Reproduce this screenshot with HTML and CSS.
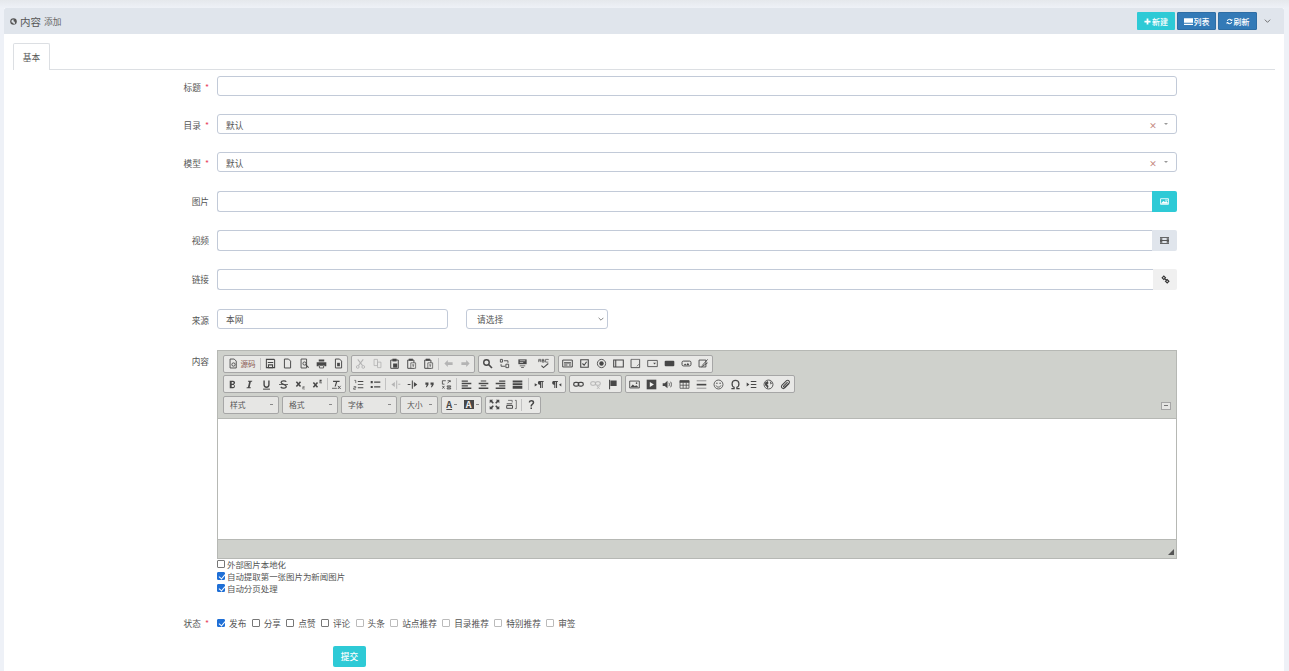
FILE: index.html
```html
<!DOCTYPE html>
<html lang="zh">
<head>
  <meta charset="UTF-8" />
  <meta name="viewport" content="width=device-width, initial-scale=1" />
  <title>内容 添加</title>
  <link rel="stylesheet" href="styles.css">
</head>
<body>
  <svg class="sprite" xmlns="http://www.w3.org/2000/svg">
    <symbol id="i-doc" viewBox="0 0 16 16"><path d="M3.5 1.500h6l3 3v10h-9z" fill="none" stroke="currentColor" stroke-width="1.400"/></symbol>
    <symbol id="i-source" viewBox="0 0 16 16"><path d="M3 1.500h6l3 3v10H3z" fill="none" stroke="currentColor" stroke-width="1.300"/><circle cx="8" cy="9.500" r="2.400" fill="none" stroke="currentColor" stroke-width="1.300"/></symbol>
    <symbol id="i-save" viewBox="0 0 16 16"><path d="M2 2h11l1 1v11H2z" fill="none" stroke="currentColor" stroke-width="1.500"/><path d="M4 6.500h8M5 10h6v4H5z" fill="none" stroke="currentColor" stroke-width="1.500"/></symbol>
    <symbol id="i-preview" viewBox="0 0 16 16"><path d="M3 1.500h8v13H3z" fill="none" stroke="currentColor" stroke-width="1.300"/><circle cx="8" cy="8" r="2.300" fill="none" stroke="currentColor" stroke-width="1.300"/><path d="M10 10l4 4" stroke="currentColor" stroke-width="1.600"/></symbol>
    <symbol id="i-print" viewBox="0 0 16 16"><path d="M4 2h8v3H4zM1 6h14v6h-3v-2H4v2H1z" fill="currentColor"/><path d="M5 11h6v3.500H5z" fill="none" stroke="currentColor" stroke-width="1.200"/></symbol>
    <symbol id="i-page" viewBox="0 0 16 16"><path d="M3.500 1.500h6l3 3v10h-9z" fill="none" stroke="currentColor" stroke-width="1.400"/><path d="M6 7h4v5H6z" fill="currentColor"/></symbol>
    <symbol id="i-cut" viewBox="0 0 16 16"><path d="M4 2l7 9M12 2l-7 9" stroke="currentColor" stroke-width="1.500" fill="none"/><circle cx="4" cy="13" r="2" fill="none" stroke="currentColor" stroke-width="1.300"/><circle cx="12" cy="13" r="2" fill="none" stroke="currentColor" stroke-width="1.300"/></symbol>
    <symbol id="i-copy" viewBox="0 0 16 16"><path d="M3 2h5v9H3zM8 6h5v8H8z" fill="none" stroke="currentColor" stroke-width="1.200"/></symbol>
    <symbol id="i-paste" viewBox="0 0 16 16"><path d="M2.500 3h11v12h-11z" fill="none" stroke="currentColor" stroke-width="1.400"/><path d="M5 1h6v4H5z" fill="currentColor"/><path d="M6 8h6v6H6z" fill="currentColor"/></symbol>
    <symbol id="i-pastet" viewBox="0 0 16 16"><path d="M2.500 3h9v12h-9z" fill="none" stroke="currentColor" stroke-width="1.400"/><path d="M4 1h6v3H4z" fill="currentColor"/><path d="M7 7h7v8H7z" fill="#e8e8e6" stroke="currentColor"/><path d="M9 10h3M10.500 10v3" stroke="currentColor"/></symbol>
    <symbol id="i-undo" viewBox="0 0 16 16"><path d="M7 3L2 8l5 5v-3h7V6H7z" fill="currentColor"/></symbol>
    <symbol id="i-redo" viewBox="0 0 16 16"><path d="M9 3l5 5-5 5v-3H2V6h7z" fill="currentColor"/></symbol>
    <symbol id="i-find" viewBox="0 0 16 16"><circle cx="6.500" cy="6.500" r="4" fill="none" stroke="currentColor" stroke-width="2"/><path d="M9.500 9.500l5 5" stroke="currentColor" stroke-width="2.400"/></symbol>
    <symbol id="i-replace" viewBox="0 0 16 16"><path d="M2 2h3v4H2zM10 9h4v5h-4z" fill="none" stroke="currentColor" stroke-width="1.300"/><path d="M7 4h6v3M9 12H3V9" fill="none" stroke="currentColor" stroke-width="1.300"/></symbol>
    <symbol id="i-selectall" viewBox="0 0 16 16"><path d="M2 2h12v7H2z" fill="currentColor"/><path d="M4 11h8v1H4zM6 13.500h4v1H6z" fill="currentColor"/><path d="M4 4h8M4 6.500h5" stroke="#e8e8e6"/></symbol>
    <symbol id="i-spell" viewBox="0 0 16 16"><path d="M1 6V2h3v4M1 4h3M6 2h2.500v2H6zm0 2h3v2H6zM11 2h4v1M11 2v4h4" fill="none" stroke="currentColor"/><path d="M5 11l3 3 7-6" fill="none" stroke="currentColor" stroke-width="1.500"/></symbol>
    <symbol id="i-form" viewBox="0 0 16 16"><path d="M1 3h14v10H1z" fill="none" stroke="currentColor" stroke-width="1.400"/><path d="M3 6h10v2H3zM3 9.500h5v1.500H3zM10 9.500h3v1.500h-3z" fill="currentColor"/></symbol>
    <symbol id="i-check" viewBox="0 0 16 16"><path d="M2.500 2.500h11v11h-11z" fill="none" stroke="currentColor" stroke-width="1.600"/><path d="M5 8l2.500 2.500L11 5.500" fill="none" stroke="currentColor" stroke-width="1.600"/></symbol>
    <symbol id="i-radio" viewBox="0 0 16 16"><circle cx="8" cy="8" r="6" fill="none" stroke="currentColor" stroke-width="1.300"/><circle cx="8" cy="8" r="3.200" fill="currentColor"/></symbol>
    <symbol id="i-text" viewBox="0 0 16 16"><path d="M1 3h14v10H1z" fill="none" stroke="currentColor" stroke-width="1.500"/><path d="M4 3v10" stroke="currentColor" stroke-width="1.500"/></symbol>
    <symbol id="i-area" viewBox="0 0 16 16"><path d="M1.500 2v12H14l0-12" fill="none" stroke="currentColor" stroke-width="1.300"/><path d="M1.500 2h12.500M10 12l3-3" stroke="currentColor"/></symbol>
    <symbol id="i-select" viewBox="0 0 16 16"><path d="M1 3.500h14v9H1z" fill="none" stroke="currentColor" stroke-width="1.200"/><path d="M9 7h4l-2 2.500z" fill="currentColor"/></symbol>
    <symbol id="i-btn" viewBox="0 0 16 16"><rect x="1" y="4" width="14" height="8" rx="1.500" fill="currentColor"/></symbol>
    <symbol id="i-imgbtn" viewBox="0 0 16 16"><rect x="1.500" y="4.500" width="13" height="7" rx="2" fill="none" stroke="currentColor" stroke-width="1.400"/><path d="M4 10l2-2 2 2 2-3 2 3z" fill="currentColor"/></symbol>
    <symbol id="i-hidden" viewBox="0 0 16 16"><path d="M1.500 3h10v10h-10z" fill="none" stroke="currentColor" stroke-width="1.300"/><path d="M6 11l8-9M5 13l9-6" stroke="currentColor" stroke-width="1.300"/></symbol>
    <symbol id="i-bold" viewBox="0 0 16 16"><path d="M4 2.500h5a2.800 2.800 0 0 1 1 5.400 3 3 0 0 1-1 5.600H4zM6.800 4.500v2.400H8.500a1.200 1.200 0 0 0 0-2.400zM6.800 8.900v2.600H9a1.300 1.300 0 0 0 0-2.600z" fill="currentColor" fill-rule="evenodd"/></symbol>
    <symbol id="i-italic" viewBox="0 0 16 16"><path d="M6 2.500h6l-.3 1.500H10L8.200 12H10l-.3 1.500h-6l.3-1.500h1.700L7.500 4H5.700z" fill="currentColor"/></symbol>
    <symbol id="i-under" viewBox="0 0 16 16"><path d="M4.500 2v6.500a3.500 3.500 0 0 0 7 0V2" fill="none" stroke="currentColor" stroke-width="2"/><path d="M3 14h10v1.500H3z" fill="currentColor"/></symbol>
    <symbol id="i-strike" viewBox="0 0 16 16"><path d="M12 4c-1-1.500-7-2-7.500 1 0 3 7.500 2.500 7.500 6 0 3-6.500 3-8 .5" fill="none" stroke="currentColor" stroke-width="1.800"/><path d="M1.500 7.500h13v1.200h-13z" fill="currentColor"/></symbol>
    <symbol id="i-sub" viewBox="0 0 16 16"><path d="M2 4l6 7M8 4l-6 7" stroke="currentColor" stroke-width="2.200"/><path d="M11 11h3v1.500h-2V14h2.500v1H11z" fill="currentColor"/></symbol>
    <symbol id="i-sup" viewBox="0 0 16 16"><path d="M2 5l6 7M8 5l-6 7" stroke="currentColor" stroke-width="2.200"/><path d="M11 1h3v2.500h-2V5h2.500v1H11z" fill="currentColor"/></symbol>
    <symbol id="i-clear" viewBox="0 0 16 16"><path d="M3 2.500h9.500V4.300H9L7 11H5.200L7.200 4.300H3z" fill="currentColor"/><path d="M1.500 13.500h7" stroke="currentColor" stroke-width="1.200"/><path d="M10 10l4 4.500M14 10l-4 4.500" stroke="currentColor" stroke-width="1.300"/></symbol>
    <symbol id="i-ol" viewBox="0 0 16 16"><path d="M7 3h8v1.300H7zM7 7.500h8v1.300H7zM7 12h8v1.300H7z" fill="currentColor"/><path d="M2 2h2v4M1 11h3v2H1v2h3" fill="none" stroke="currentColor"/></symbol>
    <symbol id="i-ul" viewBox="0 0 16 16"><path d="M1 3h3v3H1zM1 10h3v3H1zM6 3.500h9v2H6zM6 10.500h9v2H6z" fill="currentColor"/></symbol>
    <symbol id="i-outdent" viewBox="0 0 16 16"><path d="M9 2h1.500v12H9zM12 7h3v1.500h-3zM7 4.500v7L2 8z" fill="currentColor"/></symbol>
    <symbol id="i-indent" viewBox="0 0 16 16"><path d="M7 2h1.500v12H7zM1 7.200h4V8.800H1zM10 4.500v7l5-3.500z" fill="currentColor"/></symbol>
    <symbol id="i-quote" viewBox="0 0 16 16"><path d="M2 5h4.500v3.500L4 12H2.500l1.500-3.500H2zM9.500 5H14v3.500L11.500 12H10l1.500-3.500h-2z" fill="currentColor"/></symbol>
    <symbol id="i-div" viewBox="0 0 16 16"><path d="M2 2.500h5M2 2.500v5h3M9.500 2.500h4v2M9.500 6l4-3.500M2 10l3 4M5 10l-3 4M9 10h5v1.500H9zM9 13h5v1.500H9z" fill="none" stroke="currentColor" stroke-width="1.200"/></symbol>
    <symbol id="i-left" viewBox="0 0 16 16"><path d="M1 2h9v2H1zM1 5.500h14v2H1zM1 9h9v2H1zM1 12.500h14v2H1z" fill="currentColor"/></symbol>
    <symbol id="i-center" viewBox="0 0 16 16"><path d="M4 2h8v1.600H4zM1 5.500h14v2H1zM4 9h8v1.600H4zM1 12.500h14v2H1z" fill="currentColor"/></symbol>
    <symbol id="i-right" viewBox="0 0 16 16"><path d="M6 2h9v2H6zM1 5.500h14v2H1zM6 9h9v2H6zM1 12.500h14v2H1z" fill="currentColor"/></symbol>
    <symbol id="i-justify" viewBox="0 0 16 16"><path d="M1 2h14v3H1zM1 6h14v3H1zM1 10h14v4H1z" fill="currentColor"/></symbol>
    <symbol id="i-ltr" viewBox="0 0 16 16"><path d="M7 3h7v1.500h-1.200V13h-1.500V4.500h-1V13H8.800V8.500A3 3 0 0 1 7 3zM1 6l4 2.500L1 11z" fill="currentColor"/></symbol>
    <symbol id="i-rtl" viewBox="0 0 16 16"><path d="M3 3h7v1.500H8.800V13H7.300V4.500h-1V13H4.800V8.500A3 3 0 0 1 3 3zM15 6l-3.500 2.500L15 11z" fill="currentColor"/></symbol>
    <symbol id="i-link" viewBox="0 0 16 16"><rect x="1" y="5" width="7.500" height="5.500" rx="2.700" fill="none" stroke="currentColor" stroke-width="1.800"/><rect x="7.500" y="5" width="7.500" height="5.500" rx="2.700" fill="none" stroke="currentColor" stroke-width="1.800"/></symbol>
    <symbol id="i-unlink" viewBox="0 0 16 16"><rect x="1" y="4" width="7" height="5" rx="2.500" fill="none" stroke="currentColor" stroke-width="1.500"/><rect x="8" y="4" width="7" height="5" rx="2.500" fill="none" stroke="currentColor" stroke-width="1.500"/><path d="M10 10l4 4.500M14 10l-4 4.500" stroke="currentColor" stroke-width="1.200"/></symbol>
    <symbol id="i-flag" viewBox="0 0 16 16"><path d="M3 1h1.500v14H3zM5 2h9v8H5z" fill="currentColor"/></symbol>
    <symbol id="i-image" viewBox="0 0 16 16"><path d="M1 3h14v10H1z" fill="none" stroke="currentColor" stroke-width="1.300"/><path d="M2 12l3.500-4 3 2.500 2-1.500 3.500 3z" fill="currentColor"/><circle cx="11" cy="6" r="1.200" fill="currentColor"/></symbol>
    <symbol id="i-flash" viewBox="0 0 16 16"><path d="M1 1h14v14H1z" fill="currentColor"/><path d="M5.500 4.500v7l6-3.500z" fill="#f2f2f0"/></symbol>
    <symbol id="i-audio" viewBox="0 0 16 16"><path d="M1 6h3l4-3.500v11L4 10H1z" fill="currentColor"/><path d="M10 5.500c1 1.500 1 3.500 0 5M12.500 4c1.600 2.500 1.600 5.500 0 8" fill="none" stroke="currentColor" stroke-width="1.200"/></symbol>
    <symbol id="i-table" viewBox="0 0 16 16"><path d="M1 2h14v3.500H1z" fill="currentColor"/><path d="M1.500 2.500h13v11h-13zM1.500 9h13M6 5v8.500M10.500 5v8.500" fill="none" stroke="currentColor" stroke-width="1.100"/></symbol>
    <symbol id="i-hr" viewBox="0 0 16 16"><path d="M1 1.500h14v2H1z" fill="#aaa"/><path d="M1 7h14v2.400H1z" fill="currentColor"/><path d="M1 12.500h14v2H1z" fill="#aaa"/></symbol>
    <symbol id="i-smiley" viewBox="0 0 16 16"><circle cx="8" cy="8" r="6.500" fill="none" stroke="currentColor" stroke-width="1.200"/><circle cx="5.700" cy="6.200" r="1" fill="currentColor"/><circle cx="10.300" cy="6.200" r="1" fill="currentColor"/><path d="M4.500 9.500c1 3 6 3 7 0" fill="none" stroke="currentColor" stroke-width="1.200"/></symbol>
    <symbol id="i-omega" viewBox="0 0 16 16"><path d="M2 14h4v-2C2 10.500 1.500 2 8 2s6 8.500 2 10v2h4" fill="none" stroke="currentColor" stroke-width="1.800"/></symbol>
    <symbol id="i-break" viewBox="0 0 16 16"><path d="M1 5l4 3-4 3z" fill="currentColor"/><path d="M7 3h8v1.500H7zM7 7.300h8v1.500H7zM7 11.600h8v1.500H7z" fill="currentColor"/></symbol>
    <symbol id="i-iframe" viewBox="0 0 16 16"><circle cx="8" cy="8" r="6.500" fill="none" stroke="currentColor" stroke-width="1.300"/><path d="M3 5l4-2 1 3-2 2 2 2-1 4-2-3-2-2zM10 3l3 3-2 2z" fill="currentColor"/></symbol>
    <symbol id="i-attach" viewBox="0 0 16 16"><path d="M13.500 6.500l-6.500 6.500c-3 2.500-6.500-1-4-4l6.500-6.500c2.500-2 5.500 1 3.500 3.500L7 11.500c-1.500 1-2.500-.5-1.500-1.500L11 4.500" fill="none" stroke="currentColor" stroke-width="1.500"/></symbol>
    <symbol id="i-max" viewBox="0 0 16 16"><path d="M1 1h5L4.500 2.700 7 5.500 5.500 7 2.700 4.500 1 6zM15 1v5l-1.700-1.500L10.500 7 9 5.500l2.500-2.800L10 1zM1 15v-5l1.700 1.500L5.500 9 7 10.500l-2.500 2.800L6 15zM15 15h-5l1.500-1.700L9 10.500 10.500 9l2.800 2.500L15 10z" fill="currentColor"/></symbol>
    <symbol id="i-blocks" viewBox="0 0 16 16"><path d="M1 7h8M1 13.500h8.500v-4H1z" fill="none" stroke="currentColor" stroke-width="1.400"/><path d="M13 2h2v12h-2" fill="none" stroke="currentColor"/><path d="M3 2h6v3" fill="none" stroke="currentColor"/></symbol>
    <symbol id="i-help" viewBox="0 0 16 16"><path d="M4 5c0-4.500 8-4.500 8 0 0 3-3.500 3-3.500 6h-2c0-4 3.200-4 3.200-6 0-2-3.700-2-3.700 0z" fill="currentColor"/><path d="M6.500 12.300h2.200v2.200H6.500z" fill="currentColor"/></symbol>
  </svg>

  <div class="card">
    <header class="card-head">
      <h1 class="card-title">
        <svg class="title-icon" viewBox="0 0 16 16"><circle cx="8" cy="8" r="7.500" fill="#555"/><path d="M3 6l4-3 2 2-2 2 3 1 2 4-3 2-2-3-3-1z" fill="#dfe4ea"/></svg>
        内容 <small>添加</small>
      </h1>
      <div class="head-tools">
        <a class="btn btn-teal"><svg viewBox="0 0 16 16"><path d="M6 1h4v5h5v4h-5v5H6v-5H1V6h5z" fill="currentColor"/></svg>新建</a>
        <a class="btn btn-blue"><svg class="wide" viewBox="0 0 16 12"><path d="M0 0h16v8H0zM0 10h16v2H0z" fill="currentColor"/></svg>列表</a>
        <a class="btn btn-blue"><svg viewBox="0 0 16 16"><path d="M2 7a6 6 0 0 1 10.500-3L14.500 2v5h-5l1.500-1.500A4 4 0 0 0 4.200 7zM14 9a6 6 0 0 1-10.500 3l-2 2V9h5L5 10.500A4 4 0 0 0 11.800 9z" fill="currentColor"/></svg>刷新</a>
        <svg class="collapse" viewBox="0 0 10 6"><path d="M1 1l4 4 4-4" fill="none" stroke="#555" stroke-width="1.200"/></svg>
      </div>
    </header>

    <div class="card-body">
      <ul class="tabs">
        <li class="tab">基本</li>
      </ul>

      <form class="form">
        <div class="row">
          <label class="row-label">标题 <i>*</i></label>
          <div class="row-field"><input class="input" type="text"></div>
        </div>
        <div class="row">
          <label class="row-label">目录 <i>*</i></label>
          <div class="row-field">
            <div class="input combo">默认<span class="combo-x">×</span><span class="combo-caret"></span></div>
          </div>
        </div>
        <div class="row row-b1">
          <label class="row-label">模型 <i>*</i></label>
          <div class="row-field">
            <div class="input combo">默认<span class="combo-x">×</span><span class="combo-caret"></span></div>
          </div>
        </div>
        <div class="row row-tall">
          <label class="row-label">图片</label>
          <div class="row-field group">
            <input class="input" type="text">
            <span class="addon addon-teal"><svg viewBox="0 0 16 16"><path d="M1 3h14v10H1z" fill="none" stroke="currentColor" stroke-width="1.500"/><path d="M2 11l4-4 3 2 2-2 3 3v2H2zM9 5h5v1H9z" fill="currentColor"/></svg></span>
          </div>
        </div>
        <div class="row row-tall">
          <label class="row-label">视频</label>
          <div class="row-field group">
            <input class="input" type="text">
            <span class="addon addon-gray"><svg viewBox="0 0 16 16"><path d="M0 2h16v12H0z" fill="#555"/><path d="M4 3.500h8v3.500H4zM4 9h8v3.500H4z" fill="#dfe4ea"/><path d="M1 4h1.500v2H1zM1 10h1.500v2H1zM13.500 4H15v2h-1.500zM13.500 10H15v2h-1.500z" fill="#dfe4ea"/></svg></span>
          </div>
        </div>
        <div class="row row-tall row-b1">
          <label class="row-label">链接</label>
          <div class="row-field group">
            <input class="input" type="text">
            <span class="addon addon-light"><svg viewBox="0 0 16 16"><path d="M2 5l3-3 3 3-3 3zM8 11l3-3 3 3-3 3zM6 6l4 4" fill="none" stroke="#333" stroke-width="2"/></svg></span>
          </div>
        </div>
        <div class="row row-b2">
          <label class="row-label">来源</label>
          <div class="row-field source">
            <input class="input input-source" type="text" value="本网">
            <div class="input fake-select">请选择<svg viewBox="0 0 10 6"><path d="M1 1l4 4 4-4" fill="none" stroke="#555" stroke-width="1.200"/></svg></div>
          </div>
        </div>

        <div class="row row-editor">
          <label class="row-label row-label-top">内容</label>
          <div class="row-field">
            <div class="editor">
              <div class="ed-top">
                <div class="ed-line">
                  <div class="ed-group">
                    <span class="ed-btn ed-source"><svg><use href="#i-source"/></svg><em>源码</em></span><span class="ed-sep"></span>
                    <span class="ed-btn"><svg><use href="#i-save"/></svg></span>
                    <span class="ed-btn"><svg><use href="#i-doc"/></svg></span>
                    <span class="ed-btn"><svg><use href="#i-preview"/></svg></span>
                    <span class="ed-btn"><svg><use href="#i-print"/></svg></span>
                    <span class="ed-btn"><svg><use href="#i-page"/></svg></span>
                  </div>
                  <div class="ed-group">
                    <span class="ed-btn off"><svg><use href="#i-cut"/></svg></span>
                    <span class="ed-btn off"><svg><use href="#i-copy"/></svg></span>
                    <span class="ed-btn"><svg><use href="#i-paste"/></svg></span>
                    <span class="ed-btn"><svg><use href="#i-pastet"/></svg></span>
                    <span class="ed-btn"><svg><use href="#i-pastet"/></svg></span><span class="ed-sep"></span>
                    <span class="ed-btn off"><svg><use href="#i-undo"/></svg></span>
                    <span class="ed-btn off"><svg><use href="#i-redo"/></svg></span>
                  </div>
                  <div class="ed-group">
                    <span class="ed-btn"><svg><use href="#i-find"/></svg></span>
                    <span class="ed-btn"><svg><use href="#i-replace"/></svg></span>
                    <span class="ed-btn ed-wide"><svg><use href="#i-selectall"/></svg></span>
                    <span class="ed-btn ed-wider"><svg><use href="#i-spell"/></svg></span>
                  </div>
                  <div class="ed-group">
                    <span class="ed-btn"><svg><use href="#i-form"/></svg></span>
                    <span class="ed-btn"><svg><use href="#i-check"/></svg></span>
                    <span class="ed-btn"><svg><use href="#i-radio"/></svg></span>
                    <span class="ed-btn"><svg><use href="#i-text"/></svg></span>
                    <span class="ed-btn"><svg><use href="#i-area"/></svg></span>
                    <span class="ed-btn"><svg><use href="#i-select"/></svg></span>
                    <span class="ed-btn"><svg><use href="#i-btn"/></svg></span>
                    <span class="ed-btn"><svg><use href="#i-imgbtn"/></svg></span>
                    <span class="ed-btn"><svg><use href="#i-hidden"/></svg></span>
                  </div>
                </div>
                <div class="ed-line">
                  <div class="ed-group">
                    <span class="ed-btn"><svg><use href="#i-bold"/></svg></span>
                    <span class="ed-btn"><svg><use href="#i-italic"/></svg></span>
                    <span class="ed-btn"><svg><use href="#i-under"/></svg></span>
                    <span class="ed-btn"><svg><use href="#i-strike"/></svg></span>
                    <span class="ed-btn"><svg><use href="#i-sub"/></svg></span>
                    <span class="ed-btn"><svg><use href="#i-sup"/></svg></span><span class="ed-sep ed-sep-thin"></span>
                    <span class="ed-btn"><svg><use href="#i-clear"/></svg></span>
                  </div>
                  <div class="ed-group">
                    <span class="ed-btn"><svg><use href="#i-ol"/></svg></span>
                    <span class="ed-btn"><svg><use href="#i-ul"/></svg></span><span class="ed-sep"></span>
                    <span class="ed-btn off"><svg><use href="#i-outdent"/></svg></span>
                    <span class="ed-btn"><svg><use href="#i-indent"/></svg></span>
                    <span class="ed-btn"><svg><use href="#i-quote"/></svg></span>
                    <span class="ed-btn"><svg><use href="#i-div"/></svg></span><span class="ed-sep"></span>
                    <span class="ed-btn"><svg><use href="#i-left"/></svg></span>
                    <span class="ed-btn"><svg><use href="#i-center"/></svg></span>
                    <span class="ed-btn"><svg><use href="#i-right"/></svg></span>
                    <span class="ed-btn"><svg><use href="#i-justify"/></svg></span><span class="ed-sep ed-sep-wide"></span>
                    <span class="ed-btn"><svg><use href="#i-ltr"/></svg></span>
                    <span class="ed-btn"><svg><use href="#i-rtl"/></svg></span>
                  </div>
                  <div class="ed-group">
                    <span class="ed-btn"><svg><use href="#i-link"/></svg></span>
                    <span class="ed-btn off"><svg><use href="#i-unlink"/></svg></span>
                    <span class="ed-btn"><svg><use href="#i-flag"/></svg></span>
                  </div>
                  <div class="ed-group ed-group-tight">
                    <span class="ed-btn"><svg><use href="#i-image"/></svg></span>
                    <span class="ed-btn"><svg><use href="#i-flash"/></svg></span>
                    <span class="ed-btn"><svg><use href="#i-audio"/></svg></span>
                    <span class="ed-btn"><svg><use href="#i-table"/></svg></span>
                    <span class="ed-btn"><svg><use href="#i-hr"/></svg></span>
                    <span class="ed-btn"><svg><use href="#i-smiley"/></svg></span>
                    <span class="ed-btn"><svg><use href="#i-omega"/></svg></span>
                    <span class="ed-btn"><svg><use href="#i-break"/></svg></span>
                    <span class="ed-btn"><svg><use href="#i-iframe"/></svg></span>
                    <span class="ed-btn"><svg><use href="#i-attach"/></svg></span>
                  </div>
                </div>
                <div class="ed-line">
                  <span class="ed-combo">样式<b></b></span>
                  <span class="ed-combo">格式<b></b></span>
                  <span class="ed-combo">字体<b></b></span>
                  <span class="ed-combo ed-combo-s">大小<b></b></span>
                  <div class="ed-group">
                    <span class="ed-btn ed-color"><u>A</u><b></b></span>
                    <span class="ed-btn ed-color"><u class="solid">A</u><b></b></span>
                  </div>
                  <div class="ed-group">
                    <span class="ed-btn"><svg><use href="#i-max"/></svg></span>
                    <span class="ed-btn"><svg><use href="#i-blocks"/></svg></span><span class="ed-sep"></span>
                    <span class="ed-btn"><svg><use href="#i-help"/></svg></span>
                  </div>
                  <span class="ed-collapser"></span>
                </div>
              </div>
              <div class="ed-content"></div>
              <div class="ed-bottom"><span class="ed-resize"></span></div>
            </div>

            <div class="opts">
              <label class="opt"><input type="checkbox">外部图片本地化</label>
              <label class="opt"><input type="checkbox" checked>自动提取第一张图片为新闻图片</label>
              <label class="opt"><input type="checkbox" checked>自动分页处理</label>
            </div>
          </div>
        </div>

        <div class="row row-state">
          <label class="row-label row-label-flat">状态 <i>*</i></label>
          <div class="row-field states">
            <label class="state"><input type="checkbox" checked>发布</label>
            <label class="state"><input type="checkbox">分享</label>
            <label class="state"><input type="checkbox">点赞</label>
            <label class="state"><input type="checkbox">评论</label>
            <label class="state pale"><input type="checkbox">头条</label>
            <label class="state pale"><input type="checkbox">站点推荐</label>
            <label class="state pale"><input type="checkbox">目录推荐</label>
            <label class="state pale"><input type="checkbox">特别推荐</label>
            <label class="state pale"><input type="checkbox">审签</label>
          </div>
        </div>

        <div class="form-foot">
          <button class="btn btn-teal btn-submit" type="button">提交</button>
        </div>
      </form>
    </div>
  </div>
</body>
</html>
```

FILE: styles.css
```css
* {
  box-sizing: border-box;
}

html, body {
  height: 100%;
}

body {
  margin: 0;
  padding: 8px 5px 0 4px;
  overflow: hidden;
  background: linear-gradient(#e5e8ec, #eef1f7 8px);
  font-family: "Noto Sans CJK SC", "Liberation Sans", sans-serif;
  font-size: 8.7px;
  color: #555;
}

.sprite {
  display: none;
}

.card {
  background: #fff;
  min-height: 100%;
}

.card-head {
  height: 26px;
  background: #e0e5ec;
  display: flex;
  align-items: center;
  justify-content: space-between;
  padding: 0 13px 0 6px;
  border-radius: 2px 2px 0 0;
}

.card-title {
  margin: 0;
  font-size: 10.5px;
  font-weight: 400;
  color: #555;
  display: flex;
  align-items: center;
  gap: 3px;
}

.card-title small {
  font-size: 8.7px;
  color: #666;
}

.title-icon {
  width: 7px;
  height: 7px;
}

.head-tools {
  display: flex;
  align-items: center;
  gap: 2px;
}

.btn {
  display: flex;
  align-items: center;
  justify-content: center;
  gap: 1px;
  height: 18px;
  border: 0;
  border-radius: 1px;
  color: #fff;
  font-family: inherit;
  font-size: 8px;
  font-weight: 500;
}

.btn svg {
  width: 7px;
  height: 7px;
}

.btn svg.wide {
  width: 9px;
}

.btn-teal {
  width: 38px;
  background: #2ecad6;
}

.btn-blue {
  width: 39px;
  background: #337ab7;
  border: 1px solid #2e6da4;
}

.collapse {
  width: 7px;
  height: 4px;
  margin-left: 5px;
}

.card-body {
  padding: 9px 9px 0;
}

.tabs {
  list-style: none;
  margin: 0 0 6px;
  padding: 0;
  height: 27px;
  border-bottom: 1px solid #dcdfe3;
  display: flex;
}

.tab {
  width: 37px;
  height: 27px;
  background: #fff;
  border: 1px solid #dcdfe3;
  border-bottom: 0;
  border-radius: 2px 2px 0 0;
  display: flex;
  align-items: center;
  justify-content: center;
}

.row {
  display: flex;
  margin-bottom: 18px;
}

.row-b1 {
  margin-bottom: 19px;
}

.row-b2 {
  margin-bottom: 21px;
}

.row-editor {
  margin-bottom: 23px;
}

.row-state {
  margin-bottom: 16px;
}

.row-label {
  width: 204px;
  padding: 2px 8px 0 0;
  flex: none;
  display: flex;
  align-items: center;
  justify-content: flex-end;
  gap: 4px;
}

.row-tall .row-label, .row-label-flat {
  padding-top: 0;
}

.row-label i {
  color: #e9435f;
  font-style: normal;
}

.row-label-top {
  align-items: flex-start;
  padding-top: 5px;
  height: 20px;
}

.row-field {
  width: 960px;
  flex: none;
}

.input {
  display: block;
  width: 100%;
  height: 20px;
  padding: 0 8px;
  background: #fff;
  border: 1px solid #c2cad8;
  border-radius: 3px;
  font-family: inherit;
  font-size: 8.7px;
  color: #555;
  outline: 0;
}

.row-tall .input {
  height: 21px;
  border-radius: 3px 0 0 3px;
  border-right: 0;
}

.combo {
  display: flex;
  align-items: center;
  padding-top: 2px;
}

.combo-x {
  margin-left: auto;
  color: #c4857c;
  font-size: 8px;
  font-weight: 700;
}

.combo-caret {
  width: 0;
  height: 0;
  margin: -2px 0 0 7px;
  border: 2.5px solid transparent;
  border-top-color: #999;
  border-bottom: 0;
}

.group {
  display: flex;
}

.addon {
  width: 25px;
  height: 21px;
  flex: none;
  display: flex;
  align-items: center;
  justify-content: center;
  border-radius: 0 2px 2px 0;
}

.addon svg {
  width: 9px;
  height: 9px;
}

.addon-teal {
  background: #2ecad6;
  color: #fff;
}

.addon-gray {
  background: #e0e5ec;
}

.addon-light {
  background: #f0f0f0;
  width: 24px;
}

.source {
  display: flex;
  gap: 18px;
}

.input-source {
  width: 231px;
}

.fake-select {
  width: 142px;
  padding: 0 3px 0 10px;
  display: flex;
  align-items: center;
  justify-content: space-between;
}

.fake-select svg {
  width: 6px;
  height: 4px;
}

.editor {
  height: 209px;
  display: flex;
  flex-direction: column;
  border: 1px solid #b6b8b4;
  background: #cfd1cc;
}

.ed-top {
  height: 68px;
  padding: 3.8px 5px 0;
  flex: none;
  border-bottom: 1px solid #b6b8b4;
}

.ed-line {
  display: flex;
  gap: 3px;
  height: 18px;
  margin-bottom: 2.5px;
  position: relative;
}

.ed-group {
  display: flex;
  align-items: center;
  height: 18px;
  border: 1px solid #a6a6a6;
  border-radius: 2px;
  background: #e8e8e6;
}

.ed-btn {
  width: 17px;
  height: 14px;
  flex: none;
  display: flex;
  align-items: center;
  justify-content: center;
  color: #474747;
}

.ed-group-tight .ed-btn {
  width: 16.8px;
}

.ed-btn svg {
  width: 11px;
  height: 11px;
}

.ed-btn.off {
  color: #b4b4b4;
}

.ed-source {
  width: 35px;
  gap: 2px;
}

.ed-source em {
  font-style: normal;
  font-size: 7.5px;
  color: #8a5a50;
}

.ed-wide {
  width: 19px;
}

.ed-wider {
  width: 22px;
}

.ed-sep {
  width: 1px;
  height: 12px;
  margin: 0 1px;
  flex: none;
  background: #c2c2c2;
}

.ed-sep-thin {
  margin: 0 .5px;
}

.ed-sep-wide {
  margin: 0 2px;
}

.ed-combo {
  width: 56px;
  height: 18px;
  padding: 0 5px 1px 6px;
  display: flex;
  align-items: center;
  justify-content: space-between;
  border: 1px solid #a6a6a6;
  border-radius: 2px;
  background: #e6e6e4;
  font-size: 7.8px;
  color: #555;
}

.ed-combo-s {
  width: 38px;
}

.ed-combo b, .ed-color b {
  width: 3px;
  height: 1px;
  background: #888;
}

.ed-color {
  width: 19.5px;
  gap: 2px;
  font-size: 9px;
  font-weight: 700;
}

.ed-color u.solid {
  background: #474747;
  color: #f0f0ee;
  text-decoration: none;
  padding: 0 2px;
  line-height: 9px;
}

.ed-collapser {
  position: absolute;
  right: 0;
  top: 6px;
  width: 10px;
  height: 8px;
  background: #e6e6e4;
  border: 1px solid #a6a6a6;
}

.ed-collapser::after {
  content: "";
  display: block;
  width: 4px;
  height: 1px;
  margin: 2px auto;
  background: #777;
}

.ed-content {
  flex: 1;
  background: #fff;
}

.ed-bottom {
  height: 19px;
  flex: none;
  display: flex;
  justify-content: flex-end;
  align-items: flex-end;
  padding: 0 1px 1px 0;
  border-top: 1px solid #b6b8b4;
}

.ed-resize {
  width: 0;
  height: 0;
  margin: 0 1px 2px 0;
  border-left: 6px solid transparent;
  border-bottom: 6px solid #555;
}

.opts {
  margin-top: -1px;
}

.opt {
  display: flex;
  align-items: center;
  gap: 2px;
  height: 12px;
  font-size: 8.45px;
}

.opts input, .state input {
  appearance: none;
  width: 8px;
  height: 8px;
  margin: 0;
  flex: none;
  border: 1px solid #777;
  border-radius: 1px;
  background: #fff;
  position: relative;
}

.opts input:checked, .state input:checked {
  background: #1f6fd6;
  border-color: #1f6fd6;
}

/* tick drawn with two borders */
.opts input:checked::after, .state input:checked::after {
  content: "";
  position: absolute;
  left: 1.5px;
  top: -.5px;
  width: 3px;
  height: 5px;
  border: solid #fff;
  border-width: 0 1px 1px 0;
  transform: rotate(40deg);
}

.states {
  display: flex;
  align-items: center;
  height: 12px;
  gap: 5.25px;
}

.state {
  display: flex;
  align-items: center;
  gap: 4px;
}

.state.pale input {
  border-color: #bbb;
}

.form-foot {
  padding-left: 320px;
}

.btn-submit {
  width: 33px;
  height: 21px;
  border-radius: 2px;
  font-size: 8.7px;
}
```
